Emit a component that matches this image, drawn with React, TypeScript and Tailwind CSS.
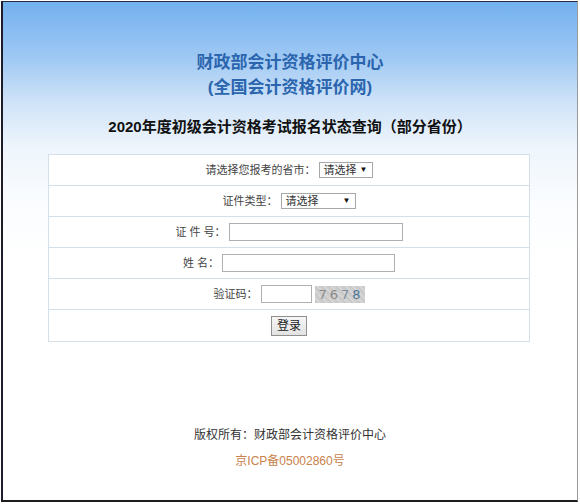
import React from "react";

const cjk = "font-['Liberation_Sans','Noto_Sans_CJK_SC',sans-serif]";

function FakeSelect({ width, label }: { width: string; label: string }) {
  return (
    <div
      className={`${width} h-[16px] flex items-center justify-between border border-[#a8a8a8] bg-white pl-[4px] pr-[4px] text-[11px] leading-none text-[#333]`}
    >
      <span>{label}</span>
      <span className="text-[8px] text-[#111]">▼</span>
    </div>
  );
}

function Row({ children, last }: { children: React.ReactNode; last?: boolean }) {
  return (
    <div
      className={`h-[31px] flex items-center justify-center gap-[3px] ${
        last ? "" : "border-b border-[#d3dfe9]"
      }`}
    >
      {children}
    </div>
  );
}

export default function App() {
  return (
    <div className={`w-[580px] h-[504px] bg-white ${cjk}`}>
      <div className="ml-[1px] mt-[1px] w-[577px] h-[501px] border-l-2 border-t border-b-2 border-r border-l-[#1c1c2a] border-t-[#2a2a3a] border-b-[#1c1c1c] border-r-[#9a9a9a] flex flex-col bg-[linear-gradient(to_bottom,#73b0ef_0px,#9ec8f3_55px,#cfe3f8_100px,#eef5fc_145px,#fafcff_200px,#ffffff_260px)]">
        {/* header */}
        <div className="h-[152px] flex flex-col items-center">
          <div className="mt-[48px] text-[17px] leading-[25px] font-bold text-[#2b65ae]">
            财政部会计资格评价中心
          </div>
          <div className="text-[17px] leading-[25px] font-bold text-[#2b65ae]">
            (全国会计资格评价网)
          </div>
          <div className="mt-[17px] text-[15px] leading-[20px] font-bold text-[#111]">
            2020年度初级会计资格考试报名状态查询（部分省份）
          </div>
        </div>

        {/* form */}
        <div className="ml-[45px] w-[482px] border border-[#d3dfe9] bg-white text-[11px] text-[#444]">
          <Row>
            <span>请选择您报考的省市：</span>
            <FakeSelect width="w-[54px]" label="请选择" />
          </Row>
          <Row>
            <span>证件类型：</span>
            <FakeSelect width="w-[75px]" label="请选择" />
          </Row>
          <Row>
            <span>证 件 号：</span>
            <div className="w-[174px] h-[18px] border border-[#b0b0b0] bg-white" />
          </Row>
          <Row>
            <span>姓 名：</span>
            <div className="w-[173px] h-[18px] border border-[#b0b0b0] bg-white" />
          </Row>
          <Row>
            <span>验证码：</span>
            <div className="w-[51px] h-[18px] border border-[#b0b0b0] bg-white" />
            <div className="w-[50px] h-[17px] flex items-center justify-center gap-[3px] bg-[repeating-linear-gradient(45deg,#d2d2d2_0px,#c4c4c4_2px,#dcdcdc_3px,#cacaca_5px)] text-[13px] leading-none font-['DejaVu_Sans',sans-serif]">
              <span className="text-[#8a8a8a]">7</span>
              <span className="text-[#8a8a8a]">6</span>
              <span className="text-[#7e8fa3]">7</span>
              <span className="text-[#4f7898]">8</span>
            </div>
          </Row>
          <Row last>
            <button className="w-[36px] h-[20px] border border-[#8f8f8f] bg-[linear-gradient(to_bottom,#f6f6f6,#e2e2e2)] text-[12px] leading-none text-[#222]">
              登录
            </button>
          </Row>
        </div>

        {/* footer */}
        <div className="mt-[83px] flex flex-col items-center">
          <div className="text-[12px] leading-[20px] text-[#333]">
            版权所有：财政部会计资格评价中心
          </div>
          <div className="mt-[6px] text-[12px] leading-[20px] text-[#c9824c]">
            京ICP备05002860号
          </div>
        </div>
      </div>
    </div>
  );
}
